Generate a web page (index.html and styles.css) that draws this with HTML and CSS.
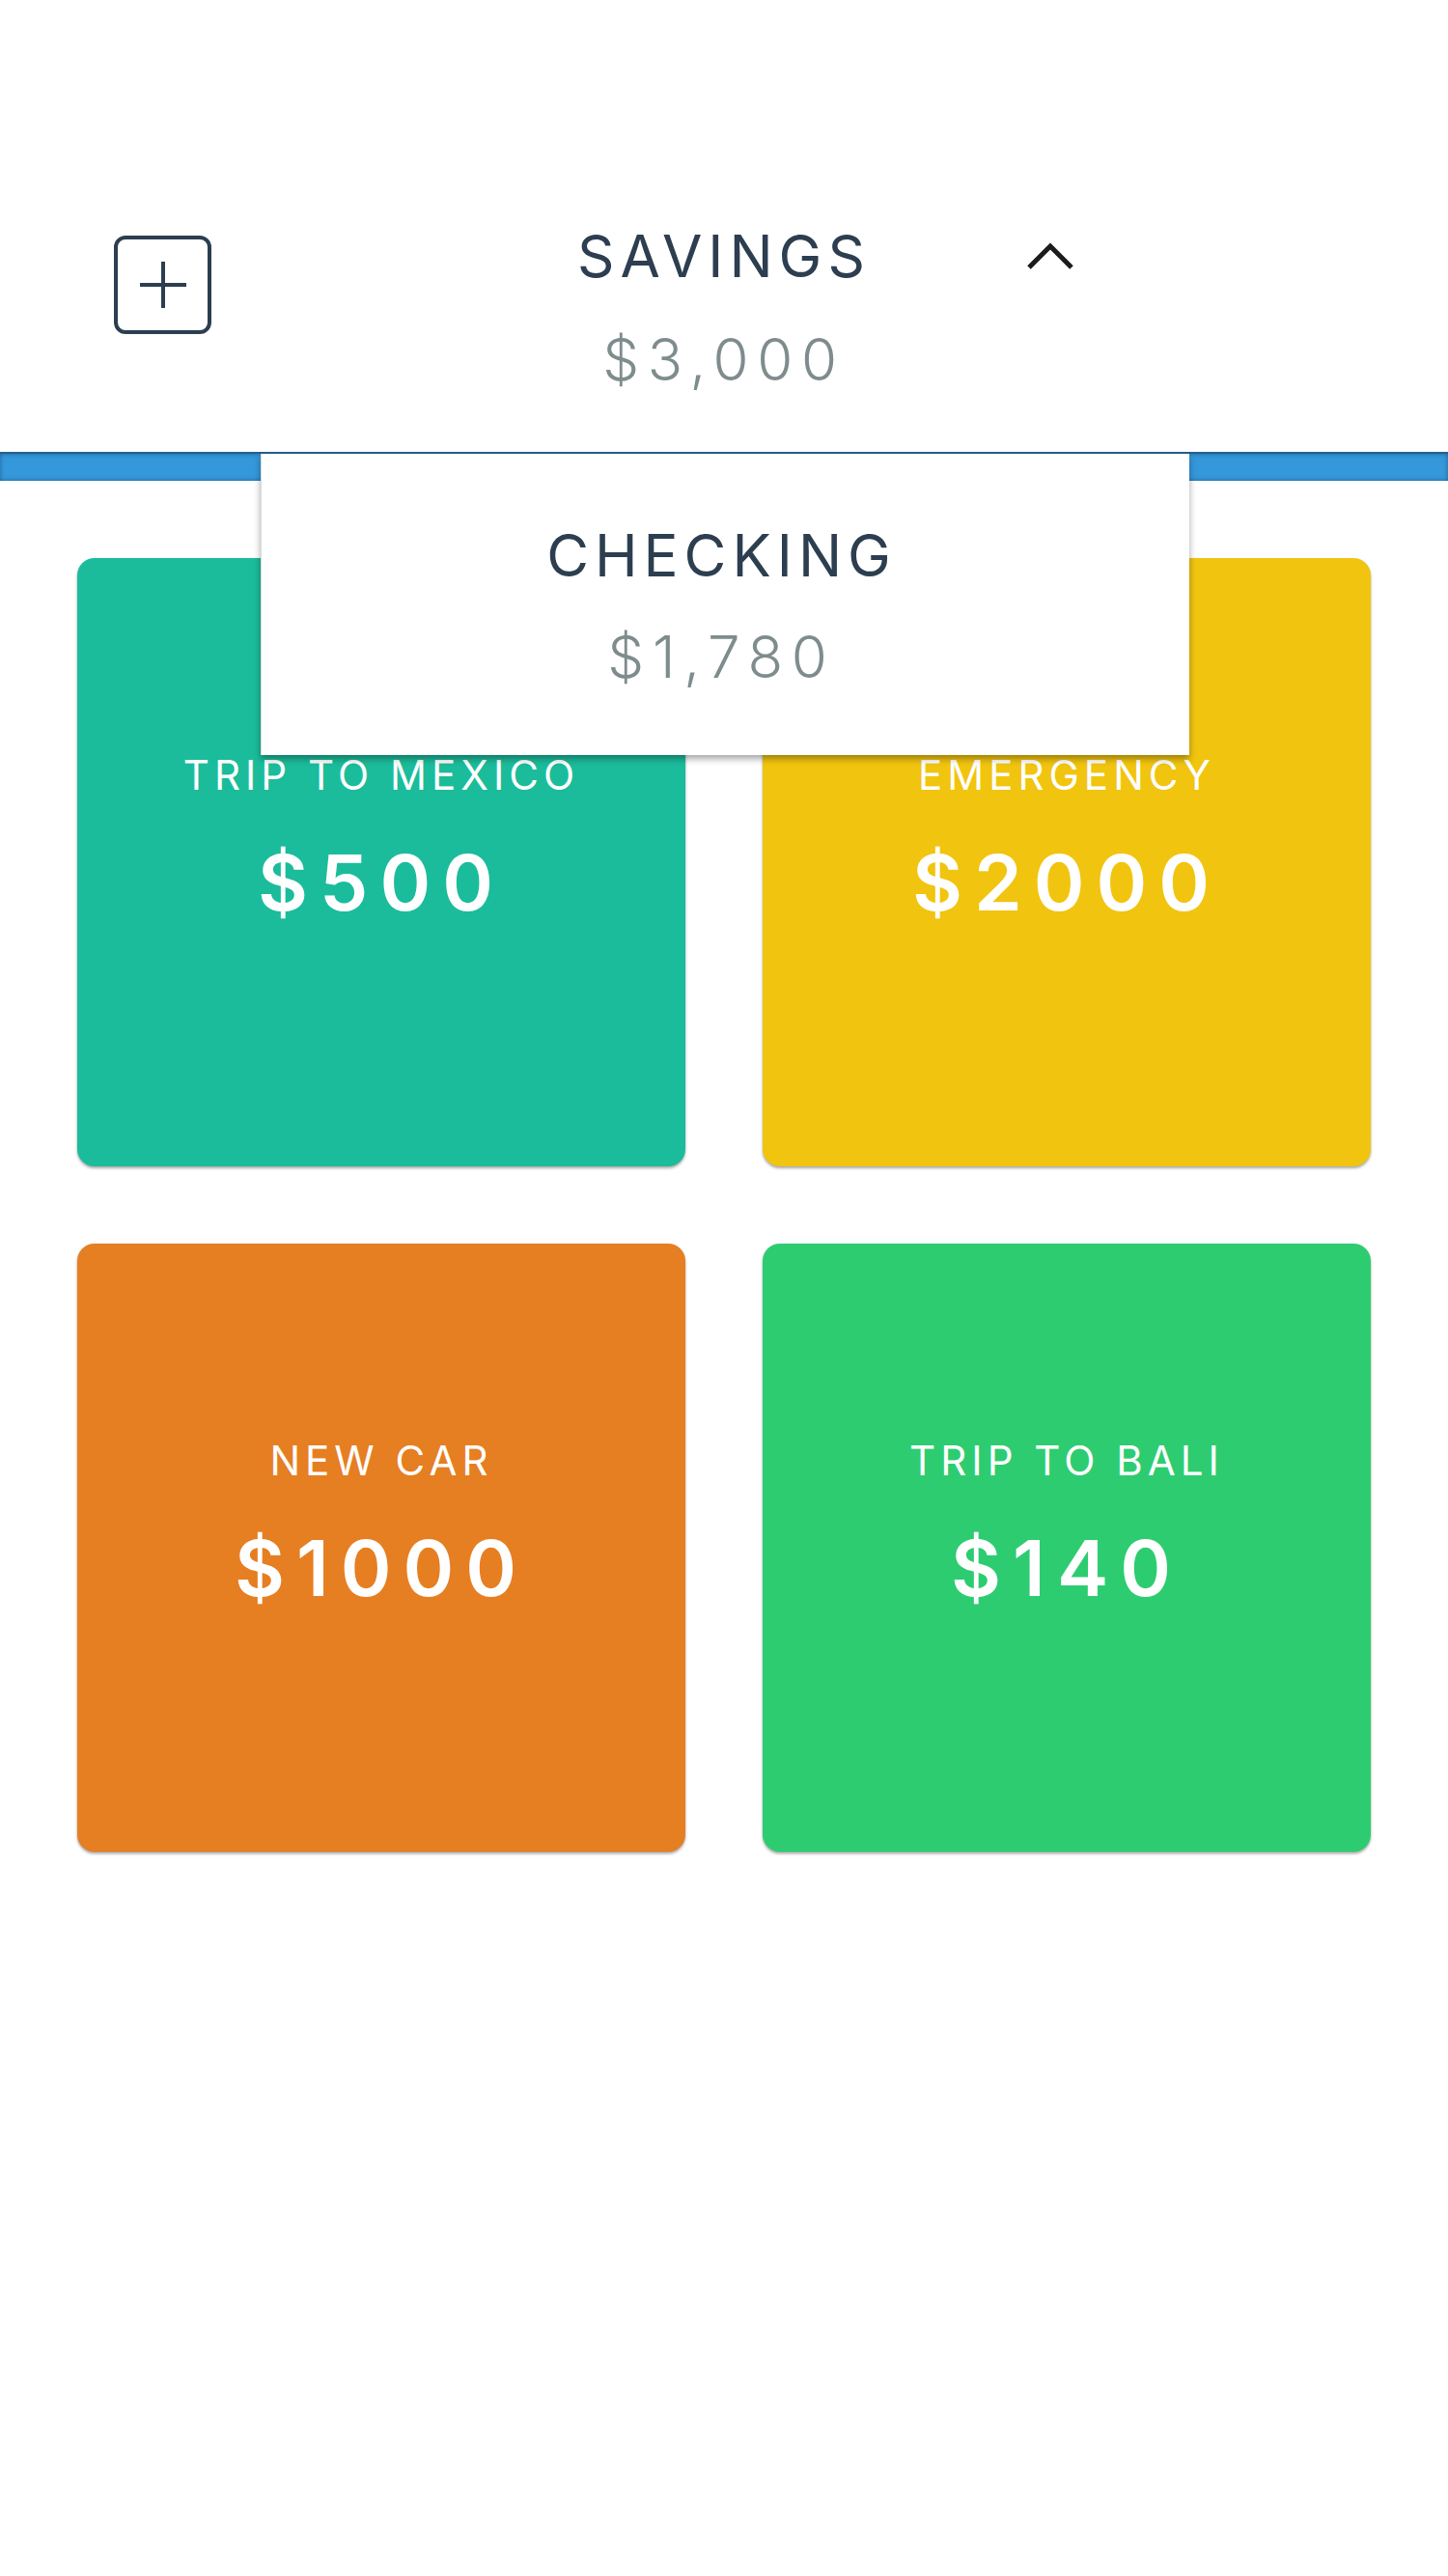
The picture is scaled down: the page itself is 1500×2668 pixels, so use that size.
FILE: index.html
```html
<!DOCTYPE html>
<html lang="en">
<head>
<meta charset="utf-8">
<title>Accounts</title>
<link rel="stylesheet" href="styles.css">
</head>
<body>
<div class="app">
  <header class="header">
    <div class="header-left">
      <button class="add-btn" aria-label="Add">
        <svg class="add-icon" viewBox="0 0 50 50" width="50" height="50"><path d="M25 1 V49 M1 25 H49" stroke="#2c3e50" stroke-width="4" fill="none"/></svg>
      </button>
    </div>
    <div class="header-center">
      <div class="acct-name">SAVINGS</div>
      <div class="acct-amount">$3,000</div>
    </div>
    <div class="header-right">
      <svg class="chevron" viewBox="0 0 52 32" width="52" height="32"><polyline points="4,29 26,7 48,29" fill="none" stroke="#1c1c1c" stroke-width="5"/></svg>
    </div>
  </header>
  <div class="bar"></div>

  <div class="dropdown">
    <div class="dd-name">CHECKING</div>
    <div class="dd-amount">$1,780</div>
  </div>

  <main class="goals">
    <div class="goal teal">
      <div class="goal-label">TRIP TO MEXICO</div>
      <div class="goal-amount">$500</div>
    </div>
    <div class="goal yellow">
      <div class="goal-label">EMERGENCY</div>
      <div class="goal-amount">$2000</div>
    </div>
    <div class="goal orange">
      <div class="goal-label">NEW CAR</div>
      <div class="goal-amount">$1000</div>
    </div>
    <div class="goal green">
      <div class="goal-label">TRIP TO BALI</div>
      <div class="goal-amount">$140</div>
    </div>
  </main>
</div>
</body>
</html>
```

FILE: styles.css
```css
* { box-sizing: border-box; }
html, body {
  margin: 0;
  padding: 0;
  background: #ffffff;
}
body {
  font-family: Inter, "Liberation Sans", "Noto Sans", sans-serif;
  width: 1500px;
  min-height: 2668px;
}
.app {
  position: relative;
}
.header {
  display: grid;
  grid-template-columns: 1fr auto 1fr;
  align-items: start;
  padding: 229px 0 60px;
  border-bottom: 2px solid #23618f;
}
.header-left {
  padding-left: 118px;
}
.add-btn {
  margin-top: 15px;
  width: 101px;
  height: 102px;
  border: 4px solid #2c3e50;
  border-radius: 12px;
  background: #fff;
  padding: 0;
  display: flex;
  align-items: center;
  justify-content: center;
}
.add-icon {
  display: block;
}
.header-center {
  text-align: center;
}
.acct-name, .dd-name {
  font-size: 60px;
  line-height: 72px;
  font-weight: 400;
  letter-spacing: 0.1em;
  color: #2c3e50;
}
.acct-amount, .dd-amount {
  font-size: 60px;
  line-height: 72px;
  font-weight: 300;
  letter-spacing: 0.145em;
  color: #7f8c8d;
}
.acct-amount {
  margin-top: 35px;
}
.header-right {
  padding-left: 160px;
}
.chevron {
  display: block;
  margin-top: 19px;
}
.bar {
  height: 28px;
  background: #3498db;
  box-shadow: inset 0 0 5px rgba(0, 0, 0, 0.35);
}
.dropdown {
  position: absolute;
  top: 470px;
  left: 270px;
  width: 962px;
  height: 312px;
  background: #fff;
  border-left: 1px solid #dcdcdc;
  box-shadow: 0 4px 7px rgba(0, 0, 0, 0.35);
  text-align: center;
  padding-top: 69px;
  padding-right: 8px;
  z-index: 2;
}
.dd-amount {
  margin-top: 33px;
}
.goals {
  display: grid;
  grid-template-columns: 630px 630px;
  gap: 80px;
  padding: 80px 80px;
}
.goal {
  height: 630px;
  border-radius: 18px;
  box-shadow: 0 2px 3px rgba(0, 0, 0, 0.35);
  color: #fff;
  text-align: center;
  padding-top: 200px;
}
.goal-label {
  font-size: 42px;
  line-height: 50px;
  font-weight: 400;
  letter-spacing: 0.12em;
}
.goal-amount {
  margin-top: 38px;
  font-size: 80px;
  line-height: 96px;
  font-weight: 600;
  letter-spacing: 0.15em;
}
.teal { background: #1bbc9b; }
.yellow { background: #f1c40f; }
.orange { background: #e67e22; }
.green { background: #2ecc71; }
```
